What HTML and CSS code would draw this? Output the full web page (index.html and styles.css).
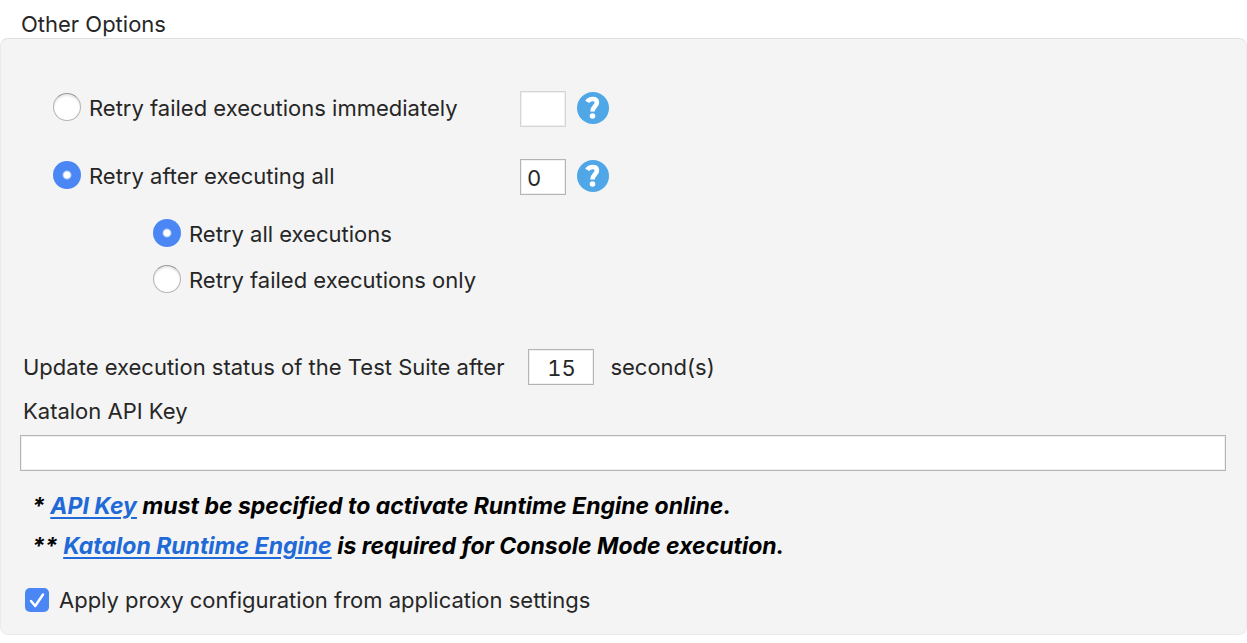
FILE: index.html
```html
<!DOCTYPE html>
<html lang="en">
<head>
<meta charset="utf-8">
<title>Other Options</title>
<link rel="stylesheet" href="styles.css">
</head>
<body>
<form class="options">
  <h1 class="title">Other Options</h1>
  <div class="panel">
    <div class="retry">
      <div class="retry-row">
        <label class="choice"><input class="radio" type="radio" name="retry">Retry failed executions immediately</label>
        <input class="field count disabled" type="text" aria-label="Immediate retry count" disabled>
        <button class="help" type="button" aria-label="Help">
          <svg class="help-icon" viewBox="0 0 32 32"><circle cx="16" cy="16" r="16" fill="#4fa7e8"/><path d="M10.200 9.900C11.400 7.900 13.300 7 15.700 7c2.700 0 4.200 1.500 4.200 3.600 0 3.900-4.400 4-4.400 9" fill="none" stroke="#fff" stroke-width="4.600"/><circle cx="15.500" cy="24" r="2.800" fill="#fff"/></svg>
        </button>
      </div>
      <div class="retry-row">
        <label class="choice"><input class="radio" type="radio" name="retry" checked>Retry after executing all</label>
        <input class="field count" type="text" value="0" aria-label="Retry count">
        <button class="help" type="button" aria-label="Help">
          <svg class="help-icon" viewBox="0 0 32 32"><circle cx="16" cy="16" r="16" fill="#4fa7e8"/><path d="M10.200 9.900C11.400 7.900 13.300 7 15.700 7c2.700 0 4.200 1.500 4.200 3.600 0 3.900-4.400 4-4.400 9" fill="none" stroke="#fff" stroke-width="4.600"/><circle cx="15.500" cy="24" r="2.800" fill="#fff"/></svg>
        </button>
      </div>
      <div class="scope">
        <label class="choice"><input class="radio" type="radio" name="scope" checked>Retry all executions</label>
        <label class="choice"><input class="radio" type="radio" name="scope">Retry failed executions only</label>
      </div>
    </div>
    <div class="update">
      <label class="update-label" for="interval">Update execution status of the Test Suite after</label>
      <input class="field interval" id="interval" type="text" value="15">
      <span>second(s)</span>
    </div>
    <label class="key-label" for="api-key">Katalon API Key</label>
    <input class="field key" id="api-key" type="text">
    <div class="notes">
      <p class="note">* <a class="link" href="#">API Key</a> must be specified to activate Runtime Engine online.</p>
      <p class="note">** <a class="link" href="#">Katalon Runtime Engine</a> is required for Console Mode execution.</p>
    </div>
    <label class="proxy">
      <span class="tick">
        <input class="checkbox" type="checkbox" checked>
        <svg class="tick-mark" viewBox="0 0 24 24"><path d="M6 13l4.200 5L18 6.500" fill="none" stroke="#fff" stroke-width="2.500" stroke-linecap="round" stroke-linejoin="round"/></svg>
      </span>
      Apply proxy configuration from application settings
    </label>
  </div>
</form>
</body>
</html>
```
FILE: styles.css
```css
* {
  box-sizing: border-box;
}

body {
  margin: 0;
  background: #fff;
  color: #262626;
  font: 22px/28px Inter, "Liberation Sans", sans-serif;
}

.title {
  margin: 0;
  padding: 10px 21px 0;
  font-size: 22px;
  font-weight: 400;
}

.panel {
  display: flex;
  flex-direction: column;
  padding: 52px 20px 20px 19px;
  border: 1px solid #ebebeb;
  border-top-color: #e0e0e0;
  border-radius: 8px;
  background: #f4f4f4;
}

.retry {
  display: flex;
  flex-direction: column;
  gap: 32px;
  padding-left: 33px;
}

.retry-row {
  display: grid;
  grid-template-columns: 467px 46px 32px;
  align-items: start;
}

.choice {
  display: flex;
  align-items: flex-start;
  gap: 8px;
  line-height: 30px;
}

.retry-row .choice {
  margin-top: 2px;
}

.radio {
  appearance: none;
  flex: none;
  width: 28px;
  height: 28px;
  margin: 0;
  border: 1px solid #b4b4b4;
  border-top-color: #989898;
  border-radius: 50%;
  background: #fff;
  box-shadow: inset 0 2px 2px #e8e8e8;
}

.radio:checked {
  border: 0;
  background: radial-gradient(circle, #fff 3px, #4a87f5 5px);
  box-shadow: none;
}

.scope {
  display: flex;
  flex-direction: column;
  gap: 16px;
  padding-left: 100px;
  margin-top: -8px;
}

.field {
  height: 36px;
  margin: 0;
  padding: 2px 6px 0;
  border: 1px solid #b4b4b4;
  border-radius: 0;
  outline: 0;
  background: #fff;
  box-shadow: inset 0 0 0 1px #f0f0f0;
  color: #262626;
  font: inherit;
  font-variant-numeric: tabular-nums;
}

.count {
  width: 46px;
}

.disabled {
  border-color: #d5d5d5;
}

.help {
  width: 32px;
  height: 32px;
  margin: 1px 0 0 11px;
  padding: 0;
  border: 0;
  background: none;
}

.help-icon {
  display: block;
}

.update {
  display: flex;
  align-items: center;
  gap: 16px;
  margin-top: 54px;
  padding-left: 3px;
}

.update-label {
  padding-right: 8px;
}

.interval {
  width: 66px;
  text-align: center;
}

.key-label {
  margin: 12px 0 10px;
  padding-left: 3px;
}

.key {
  width: 100%;
}

.notes {
  display: flex;
  flex-direction: column;
  gap: 12px;
  margin-top: 21px;
  padding-left: 12px;
}

.note {
  margin: 0;
  color: #000;
  font-size: 23px;
  font-weight: 700;
  font-style: italic;
}

.link {
  color: #2069d8;
  text-decoration-thickness: 2px;
  text-underline-offset: 3px;
}

.proxy {
  display: flex;
  align-items: center;
  gap: 10px;
  margin-top: 26px;
  padding-left: 5px;
}

.tick {
  display: grid;
  width: 24px;
  height: 24px;
}

.checkbox {
  appearance: none;
  grid-area: 1 / 1;
  width: 24px;
  height: 24px;
  margin: 0;
  border-radius: 5px;
  background: #4a87f5;
}

.tick-mark {
  grid-area: 1 / 1;
  z-index: 1;
  pointer-events: none;
}
```
